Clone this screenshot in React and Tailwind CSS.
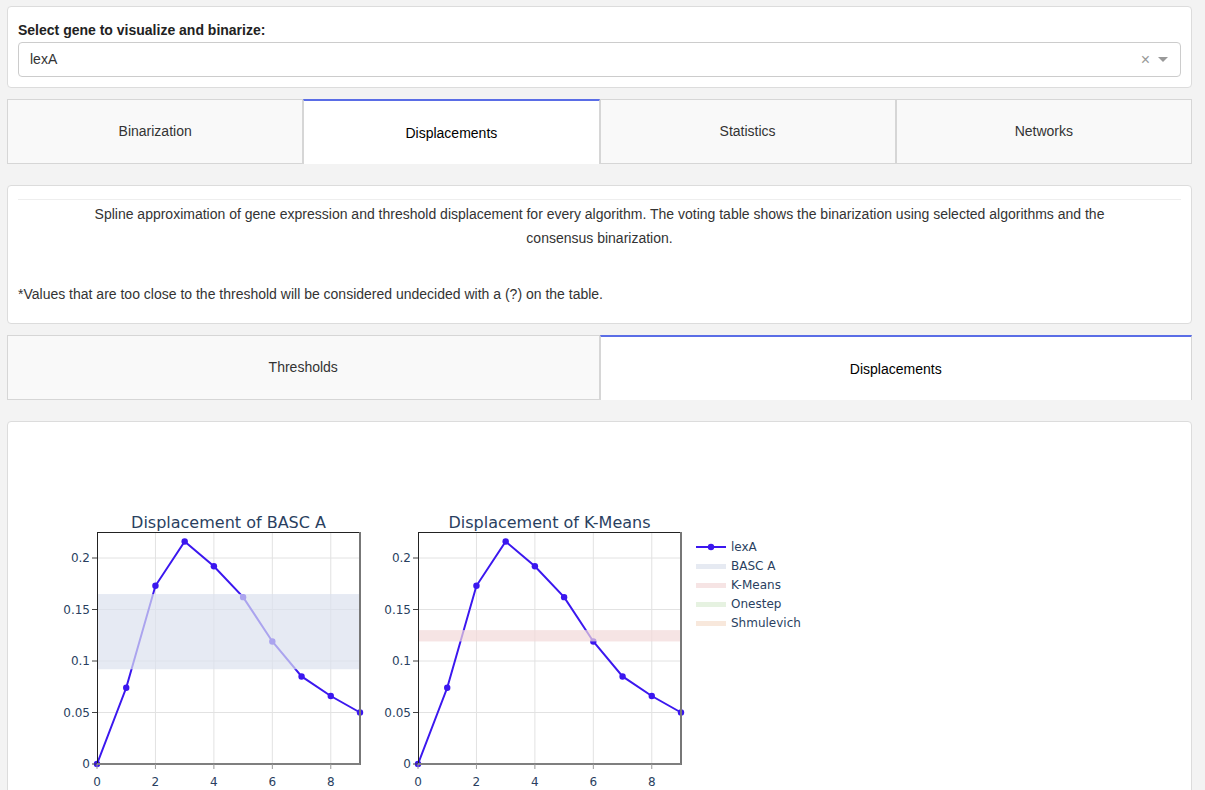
import React from "react";

const font = { fontFamily: '"Liberation Sans", Arial, sans-serif' };

const data = [0, 0.074, 0.173, 0.216, 0.192, 0.162, 0.119, 0.085, 0.066, 0.05];

function Tab({ label, active }) {
  return (
    <div
      className={
        active
          ? "flex items-center justify-center bg-white border border-[#d6d6d6] border-t-2 border-t-[#5a6de6] border-b-0 text-[14px] text-black pt-[1px]"
          : "flex items-center justify-center bg-[#f9f9f9] border border-[#d6d6d6] text-[14px] text-[#333]"
      }
    >
      {label}
    </div>
  );
}

function Plot({ x0, title, band }) {
  const x1 = x0 + 263;
  const y0 = 763;
  const yTop = 531;
  const sx = (v) => x0 + (v * 263) / 9;
  const sy = (v) => y0 - v * 1030;
  const pts = data.map((v, i) => `${sx(i)},${sy(v)}`).join(" ");
  const tickFont = { fontFamily: '"DejaVu Sans", Verdana, sans-serif', fontSize: 12, fill: "#2a3f5f" };
  return (
    <g>
      <text x={(x0 + x1) / 2} y={527} textAnchor="middle" style={{ ...tickFont, fontSize: 16 }}>
        {title}
      </text>
      {[2, 4, 6, 8].map((t) => (
        <line key={t} x1={sx(t)} x2={sx(t)} y1={yTop} y2={y0} stroke="#e2e2e2" strokeWidth="1" />
      ))}
      {[0.05, 0.1, 0.15, 0.2].map((t) => (
        <line key={t} x1={x0} x2={x1} y1={sy(t)} y2={sy(t)} stroke="#e2e2e2" strokeWidth="1" />
      ))}
      <polyline points={pts} fill="none" stroke="#3b17ef" strokeWidth="2" />
      {data.map((v, i) => (
        <circle key={i} cx={sx(i)} cy={sy(v)} r="3.2" fill="#3b17ef" />
      ))}
      <rect x={x0} y={sy(band.hi)} width={263} height={sy(band.lo) - sy(band.hi)} fill={band.color} opacity="0.7" />
      <line x1={x0} x2={x1} y1={yTop + 0.5} y2={yTop + 0.5} stroke="#222" strokeWidth="1" />
      <line x1={x0 + 0.5} x2={x0 + 0.5} y1={yTop} y2={y0} stroke="#222" strokeWidth="1" />
      <line x1={x1} x2={x1} y1={yTop} y2={y0 + 1} stroke="#777" strokeWidth="2" />
      <line x1={x0} x2={x1} y1={y0} y2={y0} stroke="#7f7f7f" strokeWidth="2" />
      {[0, 0.05, 0.1, 0.15, 0.2].map((t) => (
        <g key={t}>
          <line x1={x0 - 5} x2={x0} y1={sy(t)} y2={sy(t)} stroke="#444" strokeWidth="1" />
          <text x={x0 - 7} y={sy(t) + 4} textAnchor="end" style={tickFont}>
            {t === 0 ? "0" : String(t)}
          </text>
        </g>
      ))}
      {[0, 2, 4, 6, 8].map((t) => (
        <g key={t}>
          <line x1={sx(t)} x2={sx(t)} y1={y0} y2={y0 + 5} stroke="#999" strokeWidth="1" />
          <text x={sx(t)} y={785} textAnchor="middle" style={tickFont}>
            {t}
          </text>
        </g>
      ))}
    </g>
  );
}

function Legend() {
  const items = [
    { label: "BASC A", color: "#e6eaf2" },
    { label: "K-Means", color: "#f6e4e4" },
    { label: "Onestep", color: "#e6f2e1" },
    { label: "Shmulevich", color: "#f8e8dc" },
  ];
  const tf = { fontFamily: '"DejaVu Sans", Verdana, sans-serif', fontSize: 12, fill: "#2a3f5f" };
  return (
    <g>
      <line x1={696} x2={726} y1={546} y2={546} stroke="#3b17ef" strokeWidth="2" />
      <circle cx={711} cy={546} r="3.2" fill="#3b17ef" />
      <text x={731} y={550} style={tf}>lexA</text>
      {items.map((it, i) => (
        <g key={it.label}>
          <rect x={696} y={563 + i * 19} width={30} height={5} fill={it.color} />
          <text x={731} y={569 + i * 19} style={tf}>{it.label}</text>
        </g>
      ))}
    </g>
  );
}

export default function App() {
  return (
    <div className="min-h-screen bg-[#f3f3f3] px-[7px] pt-[6px] pr-[13px]" style={font}>
      {/* gene selector */}
      <div className="bg-white border border-[#dcdcdc] rounded-[4px] px-[10px] pt-[13px] pb-[10px]">
        <div className="text-[14px] font-bold text-[#222] leading-[20px] mb-[2px]">
          Select gene to visualize and binarize:
        </div>
        <div className="h-[35px] border border-[#cccccc] rounded-[4px] flex items-center pl-[11px] pr-[12px] text-[14px] text-[#333]">
          <span className="flex-1">lexA</span>
          <span className="text-[#999] text-[16px] leading-none mr-[8px]">×</span>
          <span className="w-0 h-0 border-l-[5px] border-r-[5px] border-t-[5px] border-l-transparent border-r-transparent border-t-[#999]" />
        </div>
      </div>

      {/* main tabs */}
      <div className="grid grid-cols-4 h-[65px] mt-[11px]">
        <Tab label="Binarization" />
        <Tab label="Displacements" active />
        <Tab label="Statistics" />
        <Tab label="Networks" />
      </div>

      {/* description */}
      <div className="bg-white border border-[#dcdcdc] rounded-[4px] px-[10px] pt-[13px] pb-[17px] mt-[21px] text-[14px] text-[#333]">
        <div className="border-t border-[#eeeeee]" />
        <p className="text-center leading-[24px] mt-[2px] px-[50px]">
          Spline approximation of gene expression and threshold displacement for every algorithm. The voting table shows the binarization using selected algorithms and the consensus binarization.
        </p>
        <p className="leading-[24px] mt-[32px]">
          *Values that are too close to the threshold will be considered undecided with a (?) on the table.
        </p>
      </div>

      {/* sub tabs */}
      <div className="grid grid-cols-2 h-[65px] mt-[11px]">
        <Tab label="Thresholds" />
        <Tab label="Displacements" active />
      </div>

      {/* charts */}
      <div className="bg-white border border-[#dcdcdc] rounded-[4px] mt-[21px] overflow-hidden">
        <svg width="1183" height="380" viewBox="8 421 1183 380" className="block">
          <Plot x0={97} title="Displacement of BASC A" band={{ lo: 0.092, hi: 0.165, color: "#dbe1ee" }} />
          <Plot x0={418} title="Displacement of K-Means" band={{ lo: 0.119, hi: 0.13, color: "#f2d8d8" }} />
          <Legend />
        </svg>
      </div>
    </div>
  );
}
